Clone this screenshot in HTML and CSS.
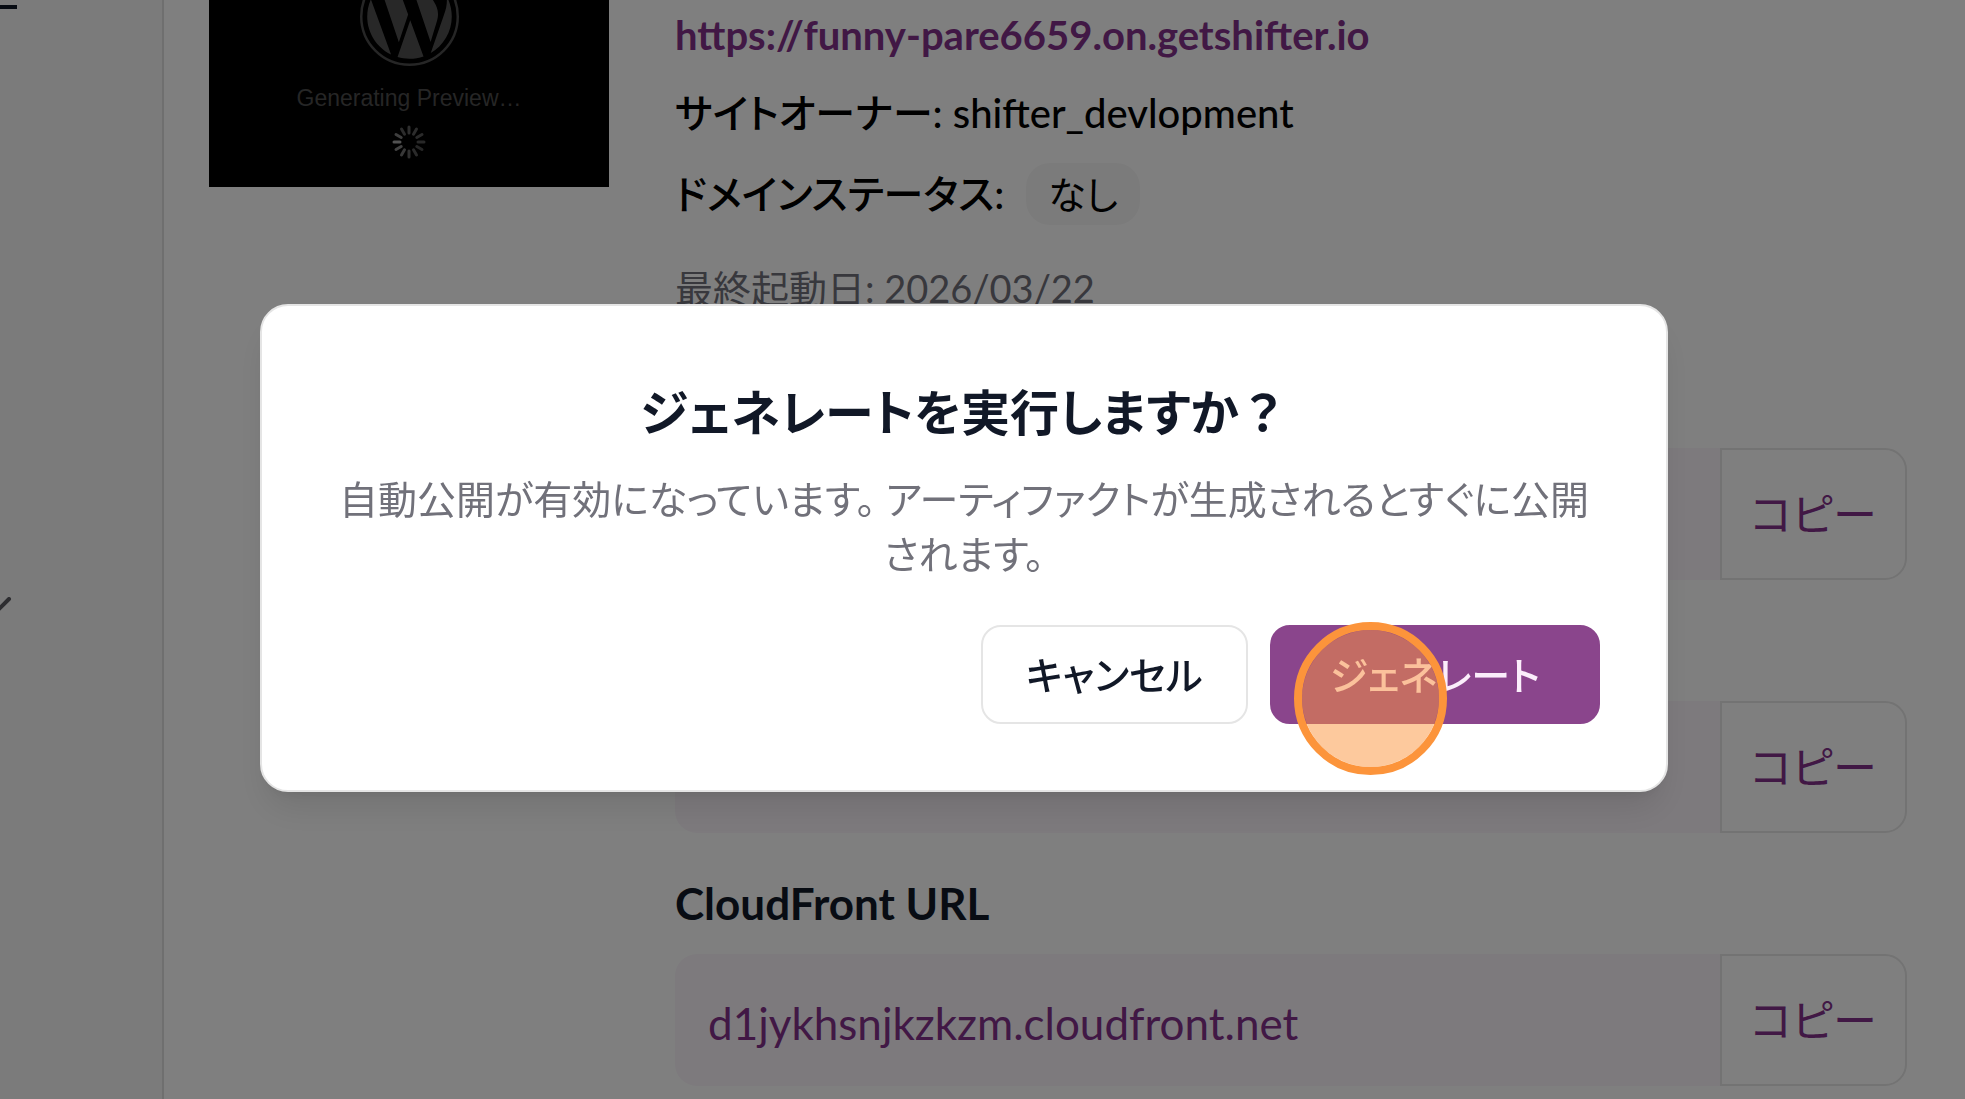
FILE: index.html
```html
<!DOCTYPE html>
<html lang="ja">

<head>
  <meta charset="utf-8" />
  <title>Shifter</title>
  <link rel="stylesheet" href="styles.css">
</head>

<body>
  <div class="page">
    <aside class="sidebar">
      <svg class="menu-icon" width="17" height="4" viewBox="0 0 17 4"><path d="M0 2h17" stroke="#111827" stroke-width="4"/></svg>
      <svg class="arrow-icon" width="12" height="14" viewBox="0 0 12 14"><path d="M-2 13L9 2" fill="none" stroke="#5a5a60" stroke-width="4" stroke-linecap="round"/></svg>
    </aside>

    <main class="site">
      <div class="thumb">
        <svg class="wp-logo" width="99" height="66" viewBox="0 8 24 16">
          <circle cx="12" cy="12" r="11.7" fill="none" stroke="#4c4c4c" stroke-width=".6"/>
          <g fill="#515151" transform="translate(12 12) scale(.95) translate(-12 -12)">
            <path d="M21.469 6.825c.84 1.537 1.318 3.3 1.318 5.175 0 3.979-2.156 7.456-5.363 9.325l3.295-9.527c.615-1.54.82-2.771.82-3.864 0-.405-.026-.78-.07-1.11z"/>
            <path d="M13.488 6.93c.647-.03 1.232-.105 1.232-.105.582-.075.514-.93-.067-.899 0 0-1.755.135-2.88.135-1.064 0-2.85-.15-2.85-.15-.585-.03-.661.855-.075.885 0 0 .54.061 1.125.09l1.68 4.605-2.37 7.08L5.354 6.9c.649-.03 1.234-.1 1.234-.1.585-.075.516-.93-.065-.896 0 0-1.746.138-2.874.138-.2 0-.438-.008-.69-.015C4.911 3.15 8.235 1.215 12 1.215c2.809 0 5.365 1.072 7.286 2.833-.046-.003-.091-.009-.141-.009-1.06 0-1.812.923-1.812 1.914 0 .89.513 1.643 1.06 2.531.411.72.89 1.643.89 2.977 0 .915-.354 1.994-.821 3.479l-1.075 3.585z"/>
            <path d="M12 22.784c-1.059 0-2.081-.153-3.048-.437l3.237-9.406 3.315 9.087c.024.053.05.101.078.149-1.12.393-2.325.607-3.582.607z"/>
            <path d="M1.211 12c0-1.564.336-3.05.935-4.39L7.29 21.709C3.694 19.96 1.212 16.271 1.211 12z"/>
          </g>
        </svg>
        <p class="thumb-text">Generating Preview…</p>
        <svg class="spinner" width="34" height="34" viewBox="-17 -17 34 34">
          <g stroke-width="3" stroke-linecap="round">
            <path stroke="#5c5c5c" d="M0-9V-15"/>
            <path stroke="#585858" d="M0-9V-15" transform="rotate(30)"/>
            <path stroke="#545454" d="M0-9V-15" transform="rotate(60)"/>
            <path stroke="#505050" d="M0-9V-15" transform="rotate(90)"/>
            <path stroke="#4c4c4c" d="M0-9V-15" transform="rotate(120)"/>
            <path stroke="#545454" d="M0-9V-15" transform="rotate(150)"/>
            <path stroke="#606060" d="M0-9V-15" transform="rotate(180)"/>
            <path stroke="#707070" d="M0-9V-15" transform="rotate(210)"/>
            <path stroke="#848484" d="M0-9V-15" transform="rotate(240)"/>
            <path stroke="#a4a4a4" d="M0-9V-15" transform="rotate(270)"/>
            <path stroke="#7c7c7c" d="M0-9V-15" transform="rotate(300)"/>
            <path stroke="#585858" d="M0-9V-15" transform="rotate(330)"/>
          </g>
        </svg>
      </div>

      <div class="info">
        <a class="site-url" href="https://funny-pare6659.on.getshifter.io">https://funny-pare6659.on.getshifter.io</a>
        <p class="owner">サイトオーナー: shifter_devlopment</p>
        <p class="domain">ドメインステータス: <span class="badge">なし</span></p>
        <p class="date">最終起動日: 2026/03/22</p>

        <div class="fields">
          <div class="field">
            <div class="copy-row">
              <div class="value"></div>
              <button class="copy" type="button">コピー</button>
            </div>
          </div>
          <div class="field">
            <div class="copy-row">
              <div class="value"></div>
              <button class="copy" type="button">コピー</button>
            </div>
          </div>
          <div class="field">
            <h3>CloudFront URL</h3>
            <div class="copy-row">
              <div class="value"><a href="https://d1jykhsnjkzkzm.cloudfront.net">d1jykhsnjkzkzm.cloudfront.net</a></div>
              <button class="copy" type="button">コピー</button>
            </div>
          </div>
        </div>
      </div>
    </main>
  </div>

  <div class="overlay">
    <div class="modal" role="dialog" aria-labelledby="modal-title">
      <h2 id="modal-title">ジェネレートを実行しますか<span class="full-width">？</span></h2>
      <p>自動公開が有効になっています。 アーティファクトが生成されるとすぐに公開されます。</p>
      <div class="actions">
        <button class="btn" type="button">キャンセル</button>
        <button class="btn primary" type="button">ジェネレート<span class="click-mark"></span></button>
      </div>
    </div>
  </div>
</body>

</html>
```

FILE: styles.css
```css
* {
  box-sizing: border-box;
}

body {
  margin: 0;
  height: 100vh;
  overflow: hidden;
  background: white;
  color: black;
  font-family: Lato, "Noto Sans CJK JP", sans-serif;
  font-feature-settings: "palt";
  font-size: 38px;
  line-height: 54px;
}

h2, h3, p {
  margin: 0;
}

a {
  color: #82318a;
  text-decoration: none;
}

button {
  font: inherit;
  font-feature-settings: inherit;
  cursor: pointer;
}

.page {
  display: flex;
  height: 100vh;
}

.sidebar {
  width: 164px;
  flex: none;
  display: flex;
  flex-direction: column;
  padding-top: 5px;
  background: #f6f6f6;
  border-right: 2px solid #dedede;
}

.arrow-icon {
  margin-top: 588px;
}

.site {
  flex: 1;
  display: flex;
  align-items: flex-start;
  gap: 66px;
  padding: 0 58px 0 45px;
}

/* preview image */
.thumb {
  width: 400px;
  height: 187px;
  flex: none;
  display: flex;
  flex-direction: column;
  align-items: center;
  background: black;
}

.thumb-text {
  margin: 16px 0 11px;
  font-family: "Liberation Sans", sans-serif;
  font-size: 23px;
  line-height: 32px;
  color: #4c4c4c;
}

.info {
  flex: 1;
  display: flex;
  flex-direction: column;
  padding-top: 8px;
}

.site-url {
  font-size: 40px;
  font-weight: 700;
}

.owner {
  margin-top: 24px;
  font-size: 40px;
  font-weight: 500;
}

.domain {
  display: flex;
  align-items: center;
  gap: 22px;
  margin-top: 23px;
  font-size: 40px;
  font-weight: 500;
}

.badge {
  padding: 4px 22px;
  border-radius: 24px;
  background: #f7f7f7;
  font-size: 38px;
  font-weight: 400;
}

.date {
  margin-top: 36px;
  color: #71717a;
}

.fields {
  display: grid;
  grid-auto-rows: 253px;
  margin-top: 12px;
}

.field {
  display: flex;
  flex-direction: column;
  justify-content: flex-end;
  gap: 24px;
}

.field h3 {
  font-size: 44px;
  font-weight: 700;
  color: #111827;
}

.copy-row {
  display: flex;
  height: 132px;
}

.value {
  flex: 1;
  display: flex;
  align-items: center;
  padding: 6px 33px 0;
  border-radius: 22px 0 0 22px;
  background: #faf5fb;
  font-size: 44px;
}

.copy {
  width: 187px;
  border: 2px solid #e6e6e6;
  border-radius: 0 22px 22px 0;
  background: white;
  color: #82318a;
  font-size: 44px;
}

.overlay {
  position: fixed;
  inset: 0;
  padding: 304px 297px 0 260px;
  background: rgba(0, 0, 0, .5);
}

.modal {
  padding: 66px;
  border: 2px solid #e5e5e5;
  border-radius: 28px;
  background: white;
  box-shadow: 0 22px 34px -7px rgba(0, 0, 0, .1), 0 9px 14px -9px rgba(0, 0, 0, .1);
  text-align: center;
}

.modal h2 {
  margin-bottom: 20px;
  font-size: 49px;
  font-weight: 700;
  line-height: 80px;
  color: #111827;
}

.full-width {
  font-feature-settings: normal;
}

.modal p {
  font-size: 39px;
  line-height: 55px;
  color: #71717a;
}

.actions {
  display: flex;
  justify-content: flex-end;
  gap: 22px;
  margin-top: 43px;
}

.btn {
  position: relative;
  height: 99px;
  padding: 0 43px;
  border: 2px solid #e5e5e5;
  border-radius: 20px;
  background: white;
  color: #111827;
  font-size: 39px;
  font-weight: 500;
}

.btn.primary {
  padding: 0 58px;
  border-color: #8a458c;
  background: #8a458c;
  color: #fbeefb;
}

/* circle that marks the click */
.click-mark {
  position: absolute;
  left: 22px;
  top: -5px;
  width: 153px;
  height: 153px;
  border: 8px solid #fc943b;
  border-radius: 50%;
  background: rgba(252, 148, 59, .5);
  background-clip: padding-box;
  pointer-events: none;
}
```
